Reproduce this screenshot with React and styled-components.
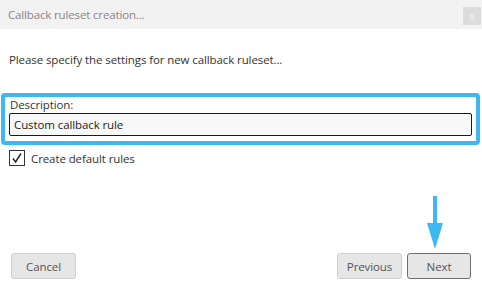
import React from "react";
import styled, { createGlobalStyle } from "styled-components";

const Global = createGlobalStyle`
  html, body { margin: 0; padding: 0; background: #fff; }
  body { width: 482px; height: 290px; overflow: hidden; font-family: "Open Sans", "Noto Sans", sans-serif; }
`;

const Dialog = styled.div`
  position: relative;
  width: 482px;
  height: 290px;
  display: flex;
  flex-direction: column;
  background: #fff;
  box-sizing: border-box;
`;

const Header = styled.div`
  height: 29px;
  background: #f2f2f2;
  display: flex;
  align-items: flex-start;
  justify-content: space-between;
  padding-left: 8px;
  flex-shrink: 0;
`;

const Title = styled.div`
  font-size: 11.5px;
  line-height: 29px;
  color: #878787;
  letter-spacing: -0.15px;
`;

const Close = styled.div`
  width: 18px;
  height: 18px;
  margin: 7px 1px 0 0;
  background: #dcdcdc;
  color: #f4f4f4;
  font-size: 10px;
  display: flex;
  align-items: center;
  justify-content: center;
  line-height: 1;
`;

const Body = styled.div`
  flex: 1;
  display: flex;
  flex-direction: column;
  padding: 0 2px 0 1px;
`;

const Intro = styled.div`
  font-size: 11.5px;
  color: #333;
  margin: 22px 0 0 8px;
  height: 18px;
  line-height: 18px;
  letter-spacing: -0.1px;
`;

const Group = styled.div`
  margin-top: 24px;
  border: 4px solid #3cb8f2;
  border-radius: 4px;
  padding: 0 4px 5px 4px;
  display: flex;
  flex-direction: column;
`;

const Label = styled.div`
  font-size: 11.5px;
  color: #333;
  line-height: 16px;
  padding-left: 1px;
  letter-spacing: -0.1px;
`;

const Input = styled.div`
  height: 21px;
  border: 1px solid #1a1a1a;
  border-radius: 2px;
  background: #f8f8f8;
  font-size: 11.5px;
  color: #222;
  display: flex;
  align-items: center;
  padding-left: 4px;
  letter-spacing: -0.1px;
`;

const CheckRow = styled.div`
  display: flex;
  align-items: center;
  gap: 6px;
  margin: 5px 0 0 8px;
`;

const Box = styled.div`
  width: 14px;
  height: 14px;
  border: 1px solid #333;
  background: #fff;
  display: flex;
  align-items: center;
  justify-content: center;
`;

const CheckLabel = styled.span`
  font-size: 11.5px;
  color: #333;
  letter-spacing: -0.1px;
`;

const Footer = styled.div`
  margin-top: auto;
  display: flex;
  justify-content: space-between;
  padding: 0 11px 11px 11px;
`;

const Group2 = styled.div`
  display: flex;
  gap: 5px;
`;

const Button = styled.div`
  width: ${p => p.w}px;
  height: 24px;
  box-sizing: content-box;
  border: 1px solid ${p => (p.primary ? "#6e6e6e" : "#cfcfcf")};
  border-radius: 3px;
  background: #e6e6e6;
  color: #555;
  font-size: 11.5px;
  display: flex;
  align-items: center;
  justify-content: center;
  letter-spacing: -0.1px;
`;

const Arrow = styled.svg`
  position: absolute;
  left: 427px;
  top: 196px;
`;

export default function App() {
  return (
    <>
      <Global />
      <Dialog>
        <Header>
          <Title>Callback ruleset creation...</Title>
          <Close>x</Close>
        </Header>
        <Body>
          <Intro>Please specify the settings for new callback ruleset...</Intro>
          <Group>
            <Label>Description:</Label>
            <Input>Custom callback rule</Input>
          </Group>
          <CheckRow>
            <Box>
              <svg width="12" height="12" viewBox="0 0 12 12">
                <path d="M2 6.5 L4.6 10 L10 1.5" fill="none" stroke="#222" strokeWidth="1.4" />
              </svg>
            </Box>
            <CheckLabel>Create default rules</CheckLabel>
          </CheckRow>
        </Body>
        <Footer>
          <Button w={63}>Cancel</Button>
          <Group2>
            <Button w={63}>Previous</Button>
            <Button w={62} primary>Next</Button>
          </Group2>
        </Footer>
        <Arrow width="16" height="54" viewBox="0 0 16 54">
          <rect x="6" y="0" width="4" height="30" fill="#3cb8f2" />
          <path d="M0 27 L16 27 L8 53 Z" fill="#3cb8f2" />
        </Arrow>
      </Dialog>
    </>
  );
}
